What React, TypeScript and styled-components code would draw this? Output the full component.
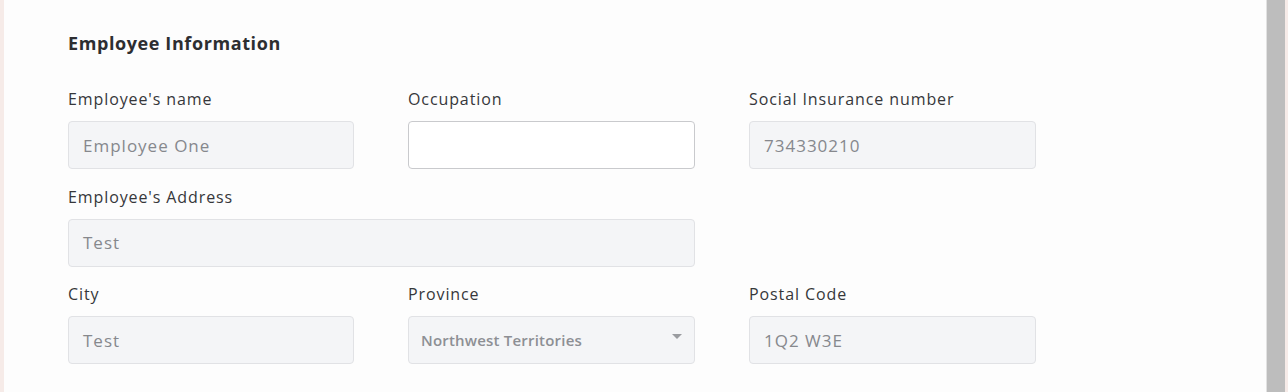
import styled, { createGlobalStyle } from "styled-components";

const GlobalStyle = createGlobalStyle`
  body {
    margin: 0;
    background: #fdfdfd;
    font-family: "Open Sans", Lato, Arial, sans-serif;
  }
`;

const Frame = styled.div`
  display: flex;
  height: 392px;
  width: 1288px;
  overflow: hidden;
`;

const EdgeStrip = styled.div`
  width: 4px;
  background: #f6ebe8;
  flex-shrink: 0;
`;

const Panel = styled.div`
  flex: 1;
  background: #fdfdfd;
  padding: 31px 0 0 64px;
`;

const Scrollbar = styled.div`
  width: 18px;
  background: #bdbdbd;
  border-left: 1px solid #e2e2e2;
  flex-shrink: 0;
`;

const RightEdge = styled.div`
  width: 3px;
  background: #f6ebe8;
  flex-shrink: 0;
`;

const Heading = styled.h2`
  margin: 0 0 34px;
  font-size: 18px;
  line-height: 24px;
  font-weight: 700;
  letter-spacing: 0.6px;
  color: #2d2e31;
`;

const Grid = styled.div`
  display: grid;
  grid-template-columns: 286px 287px 287px;
  column-gap: 54px;
  row-gap: 17.5px;
`;

const Field = styled.div<{ $span?: number }>`
  display: flex;
  flex-direction: column;
  gap: 12px;
  grid-column: span ${(p) => p.$span ?? 1};
`;

const Label = styled.label`
  font-size: 16px;
  line-height: 20px;
  font-weight: 500;
  letter-spacing: 0.9px;
  color: #36373a;
`;

const Input = styled.div<{ $editable?: boolean }>`
  box-sizing: border-box;
  height: 48px;
  border-radius: 4px;
  border: 1px solid ${(p) => (p.$editable ? "#c9cacd" : "#e1e2e5")};
  background: ${(p) => (p.$editable ? "#ffffff" : "#f4f5f7")};
  padding: 0 14px;
  display: flex;
  align-items: center;
  justify-content: space-between;
  font-size: 17px;
  letter-spacing: 1px;
  color: #86888d;
`;

const SelectText = styled.span`
  font-size: 15px;
  font-weight: 600;
  letter-spacing: 0.2px;
  color: #8d8f94;
  margin-left: -2px;
`;

const Caret = styled.span`
  width: 0;
  height: 0;
  border-left: 5px solid transparent;
  border-right: 5px solid transparent;
  border-top: 5px solid #9a9ca0;
  margin-right: -2px;
  margin-top: -8px;
`;

export default function App() {
  return (
    <>
      <GlobalStyle />
      <Frame>
        <EdgeStrip />
        <Panel>
          <Heading>Employee Information</Heading>
          <Grid>
            <Field>
              <Label>Employee's name</Label>
              <Input>Employee One</Input>
            </Field>
            <Field>
              <Label>Occupation</Label>
              <Input $editable />
            </Field>
            <Field>
              <Label>Social Insurance number</Label>
              <Input>734330210</Input>
            </Field>
            <Field $span={2}>
              <Label>Employee's Address</Label>
              <Input>Test</Input>
            </Field>
            <div />
            <Field>
              <Label>City</Label>
              <Input>Test</Input>
            </Field>
            <Field>
              <Label>Province</Label>
              <Input>
                <SelectText>Northwest Territories</SelectText>
                <Caret />
              </Input>
            </Field>
            <Field>
              <Label>Postal Code</Label>
              <Input>1Q2 W3E</Input>
            </Field>
          </Grid>
        </Panel>
        <Scrollbar />
        <RightEdge />
      </Frame>
    </>
  );
}
